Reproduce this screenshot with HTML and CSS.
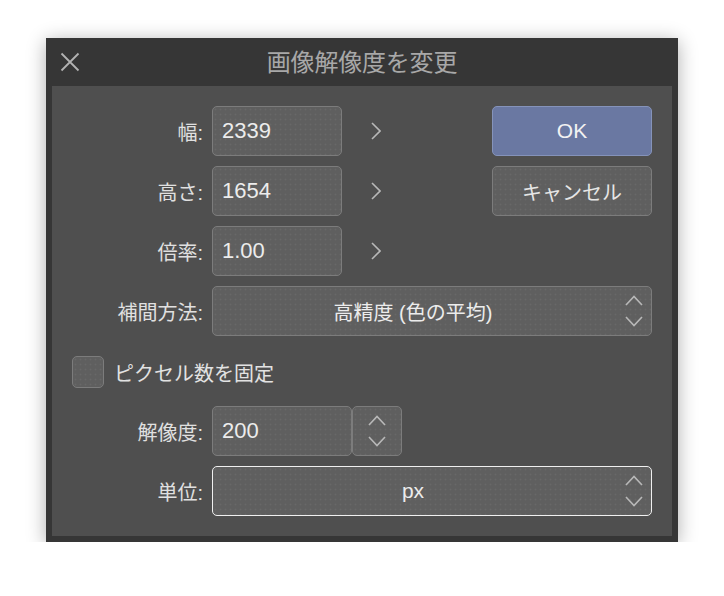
FILE: index.html
```html
<!DOCTYPE html>
<html lang="ja">
<head>
<meta charset="utf-8">
<title>画像解像度を変更</title>
<link rel="stylesheet" href="styles.css">
</head>
<body>
<div class="dialog">
  <div class="titlebar">
    <svg class="close" width="20" height="20" viewBox="0 0 20 20"><path d="M1.5 1.5L18.5 18.5M18.5 1.5L1.5 18.5"/></svg>
    <div class="title">画像解像度を変更</div>
    <div></div>
  </div>
  <div class="panel">
    <div class="row">
      <div class="label">幅:</div>
      <div class="field">
        <div class="box input short">2339</div>
        <svg class="next" width="10" height="18" viewBox="0 0 10 18"><path d="M1 1L9 9L1 17"/></svg>
        <div class="btn primary">OK</div>
      </div>
    </div>
    <div class="row">
      <div class="label">高さ:</div>
      <div class="field">
        <div class="box input short">1654</div>
        <svg class="next" width="10" height="18" viewBox="0 0 10 18"><path d="M1 1L9 9L1 17"/></svg>
        <div class="btn box">キャンセル</div>
      </div>
    </div>
    <div class="row">
      <div class="label">倍率:</div>
      <div class="field">
        <div class="box input short">1.00</div>
        <svg class="next" width="10" height="18" viewBox="0 0 10 18"><path d="M1 1L9 9L1 17"/></svg>
      </div>
    </div>
    <div class="row">
      <div class="label">補間方法:</div>
      <div class="field">
        <div class="box select">
          <span class="select-text">高精度 (色の平均)</span>
          <svg class="updown" width="18" height="32" viewBox="0 0 18 32"><path d="M1 10L9 1.5L17 10M1 22L9 30.5L17 22"/></svg>
        </div>
      </div>
    </div>
    <div class="row check-row">
      <div class="box checkbox"></div>
      <div class="check-label">ピクセル数を固定</div>
    </div>
    <div class="row">
      <div class="label">解像度:</div>
      <div class="field">
        <div class="box input medium">200</div>
        <div class="box spinner">
          <svg class="updown" width="18" height="32" viewBox="0 0 18 32"><path d="M1 10L9 1.5L17 10M1 22L9 30.5L17 22"/></svg>
        </div>
      </div>
    </div>
    <div class="row">
      <div class="label">単位:</div>
      <div class="field">
        <div class="box select focused">
          <span class="select-text">px</span>
          <svg class="updown" width="18" height="32" viewBox="0 0 18 32"><path d="M1 10L9 1.5L17 10M1 22L9 30.5L17 22"/></svg>
        </div>
      </div>
    </div>
  </div>
</div>
</body>
</html>
```
FILE: styles.css
```css
* { box-sizing: border-box; }

html, body {
  margin: 0;
  padding: 0;
  background: #ffffff;
}

body {
  font-family: "Liberation Sans", "Noto Sans CJK JP", sans-serif;
  padding: 38px 0 0 46px;
}

.dialog {
  width: 632px;
  height: 504px;
  background: #363636;
  padding: 0 6px 6px;
  box-shadow: 0 3px 18px rgba(0, 0, 0, 0.32);
  display: flex;
  flex-direction: column;
}

.titlebar {
  height: 48px;
  display: grid;
  grid-template-columns: 1fr auto 1fr;
  align-items: center;
}

.close {
  margin-left: 8px;
  fill: none;
  stroke: #b3b3b3;
  stroke-width: 1.8;
}

.title {
  color: #a8a8a8;
  font-size: 24px;
  line-height: 1;
  margin-top: 2px;
  letter-spacing: -0.2px;
}

.panel {
  flex: 1;
  background: #4f4f4f;
  padding: 20px 20px 20px 0;
  display: flex;
  flex-direction: column;
  gap: 10px;
}

.row {
  height: 50px;
  display: flex;
  align-items: center;
}

.label {
  width: 151px;
  margin-right: 9px;
  text-align: right;
  color: #e0e0e0;
  font-size: 20px;
}

.field {
  flex: 1;
  height: 50px;
  display: flex;
  align-items: center;
}

.box {
  height: 50px;
  border: 1px solid #7c7c7c;
  border-radius: 5px;
  background-color: #5f5f5f;
  background-image: radial-gradient(circle, rgba(255, 255, 255, 0.06) 0.7px, transparent 1.1px);
  background-size: 5px 5px;
}

.input {
  display: flex;
  align-items: center;
  padding-left: 9px;
  color: #ececec;
  font-size: 22px;
}

.short { width: 130px; }
.medium { width: 140px; }

.next {
  margin-left: 29px;
  fill: none;
  stroke: #b8b8b8;
  stroke-width: 1.6;
}

.btn {
  margin-left: auto;
  width: 160px;
  height: 50px;
  display: flex;
  align-items: center;
  justify-content: center;
  color: #e6e6e6;
  font-size: 20px;
  border-radius: 5px;
}

.btn.primary {
  background: #6a78a2;
  border: 1px solid #8593ba;
  color: #f2f2f2;
  font-size: 21px;
}

.select {
  width: 440px;
  display: flex;
  align-items: center;
}

.select.focused {
  border-color: #f0f0f0;
}

.select-text {
  flex: 1;
  text-align: center;
  color: #ececec;
  font-size: 20px;
}

.focused .select-text {
  font-size: 21px;
}

.updown {
  fill: none;
  stroke: #b8b8b8;
  stroke-width: 1.6;
}

.select .updown {
  margin: 0 8px 0 12px;
}

.spinner {
  width: 50px;
  display: flex;
  align-items: center;
  justify-content: center;
}

.check-row {
  padding-left: 20px;
}

.checkbox {
  width: 32px;
  height: 32px;
  border-radius: 5px;
  margin-top: 2px;
}

.check-label {
  margin-left: 10px;
  color: #e2e2e2;
  font-size: 20px;
  margin-top: 2px;
}
```
